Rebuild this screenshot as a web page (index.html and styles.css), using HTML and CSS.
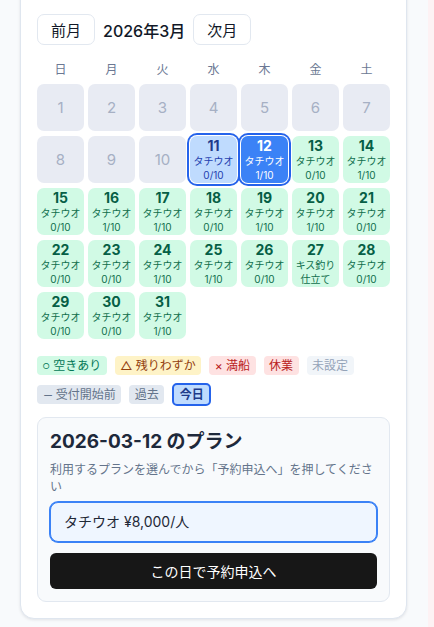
FILE: index.html
```html
<!DOCTYPE html>
<html lang="ja">
<head>
<meta charset="utf-8">
<title>予約カレンダー</title>
<link rel="stylesheet" href="styles.css">
</head>
<body>
<div class="page">
  <section class="card">
    <div class="month-nav">
      <button class="nav-btn">前月</button>
      <span class="month-title">2026年3月</span>
      <button class="nav-btn">次月</button>
    </div>
    <div class="weekdays">
      <span>日</span><span>月</span><span>火</span><span>水</span><span>木</span><span>金</span><span>土</span>
    </div>
    <div class="grid">
      <div class="cell past">1</div>
      <div class="cell past">2</div>
      <div class="cell past">3</div>
      <div class="cell past">4</div>
      <div class="cell past">5</div>
      <div class="cell past">6</div>
      <div class="cell past">7</div>
      <div class="cell past">8</div>
      <div class="cell past">9</div>
      <div class="cell past">10</div>
      <div class="cell today"><span class="num">11</span><span class="sub">タチウオ</span><span class="sub">0/10</span></div>
      <div class="cell selected"><span class="num">12</span><span class="sub">タチウオ</span><span class="sub">1/10</span></div>
      <div class="cell open"><span class="num">13</span><span class="sub">タチウオ</span><span class="sub">0/10</span></div>
      <div class="cell open"><span class="num">14</span><span class="sub">タチウオ</span><span class="sub">1/10</span></div>
      <div class="cell open"><span class="num">15</span><span class="sub">タチウオ</span><span class="sub">0/10</span></div>
      <div class="cell open"><span class="num">16</span><span class="sub">タチウオ</span><span class="sub">1/10</span></div>
      <div class="cell open"><span class="num">17</span><span class="sub">タチウオ</span><span class="sub">1/10</span></div>
      <div class="cell open"><span class="num">18</span><span class="sub">タチウオ</span><span class="sub">0/10</span></div>
      <div class="cell open"><span class="num">19</span><span class="sub">タチウオ</span><span class="sub">1/10</span></div>
      <div class="cell open"><span class="num">20</span><span class="sub">タチウオ</span><span class="sub">1/10</span></div>
      <div class="cell open"><span class="num">21</span><span class="sub">タチウオ</span><span class="sub">0/10</span></div>
      <div class="cell open"><span class="num">22</span><span class="sub">タチウオ</span><span class="sub">0/10</span></div>
      <div class="cell open"><span class="num">23</span><span class="sub">タチウオ</span><span class="sub">0/10</span></div>
      <div class="cell open"><span class="num">24</span><span class="sub">タチウオ</span><span class="sub">1/10</span></div>
      <div class="cell open"><span class="num">25</span><span class="sub">タチウオ</span><span class="sub">1/10</span></div>
      <div class="cell open"><span class="num">26</span><span class="sub">タチウオ</span><span class="sub">0/10</span></div>
      <div class="cell open"><span class="num">27</span><span class="sub">キス釣り</span><span class="sub">仕立て</span></div>
      <div class="cell open"><span class="num">28</span><span class="sub">タチウオ</span><span class="sub">0/10</span></div>
      <div class="cell open"><span class="num">29</span><span class="sub">タチウオ</span><span class="sub">0/10</span></div>
      <div class="cell open"><span class="num">30</span><span class="sub">タチウオ</span><span class="sub">0/10</span></div>
      <div class="cell open"><span class="num">31</span><span class="sub">タチウオ</span><span class="sub">1/10</span></div>
    </div>
    <div class="legend">
      <span class="badge b-open"><span class="mark">○</span> 空きあり</span>
      <span class="badge b-few">△ 残りわずか</span>
      <span class="badge b-full">× 満船</span>
      <span class="badge b-full">休業</span>
      <span class="badge b-unset">未設定</span>
      <span class="badge b-gray"><span class="dash">−</span> 受付開始前</span>
      <span class="badge b-gray">過去</span>
      <span class="badge b-today">今日</span>
    </div>
    <div class="plan">
      <h2 class="plan-title">2026-03-12 のプラン</h2>
      <p class="plan-note">利用するプランを選んでから「予約申込へ」を押してください</p>
      <div class="plan-option">タチウオ ¥8,000/人</div>
      <button class="submit">この日で予約申込へ</button>
    </div>
  </section>
  <div class="side-strip"></div>
</div>
</body>
</html>
```

FILE: styles.css
```css
* { box-sizing: border-box; }
html, body { margin: 0; padding: 0; }
body {
  background: #f8fafc;
  font-family: Inter, "Noto Sans CJK JP", sans-serif;
  color: #111827;
  overflow: hidden;
}
.page {
  display: flex;
  align-items: flex-start;
  padding-left: 20px;
  height: 627px;
}
.card {
  width: 387px;
  margin-top: -20px;
  padding: 33px 16px 16px;
  background: #fff;
  border: 1px solid #dfe6ef;
  border-radius: 14px;
  box-shadow: 0 1px 3px rgba(15, 23, 42, 0.10);
}
.side-strip {
  margin-left: auto;
  width: 6px;
  height: 100%;
  background: #fdf2f4;
}
.month-nav {
  display: flex;
  align-items: center;
  gap: 8px;
}
.nav-btn {
  height: 31px;
  padding: 0 13px;
  background: #fff;
  border: 1px solid #e2e8f0;
  border-radius: 7px;
  font-family: inherit;
  font-size: 15px;
  color: #111827;
}
.month-title {
  font-size: 16px;
  font-weight: 500;
  color: #111827;
}
.weekdays {
  display: grid;
  grid-template-columns: repeat(7, 1fr);
  column-gap: 4px;
  margin-top: 17px;
  margin-bottom: 6px;
  font-size: 12px;
  line-height: 16px;
  color: #6b7893;
  text-align: center;
}
.grid {
  display: grid;
  grid-template-columns: repeat(7, 1fr);
  grid-auto-rows: 47px;
  column-gap: 4px;
  row-gap: 5px;
}
.cell {
  border-radius: 7px;
  display: flex;
  flex-direction: column;
  align-items: center;
  justify-content: center;
}
.cell .num {
  font-size: 14px;
  line-height: 17px;
  font-weight: 700;
}
.cell .sub {
  font-size: 10px;
  line-height: 14px;
  white-space: nowrap;
}
.past {
  background: #e8ebf3;
  color: #a6b0c4;
  font-size: 15px;
}
.open {
  background: #d1fae5;
  color: #065f46;
}
.open .sub { color: #0f6e4c; }
.today {
  background: #bfdbfe;
  color: #1e3a8a;
  box-shadow: 0 0 0 1px #fff, 0 0 0 3px #2563eb;
}
.today .sub { color: #1e40af; }
.selected {
  background: #3b82f6;
  color: #fff;
  box-shadow: 0 0 0 1px #fff, 0 0 0 3px #2563eb;
}
.legend {
  display: flex;
  flex-wrap: wrap;
  align-items: center;
  gap: 8px;
  margin-top: 17px;
}
.badge {
  display: inline-block;
  height: 19px;
  padding: 0 5.5px;
  border-radius: 4px;
  font-size: 12px;
  line-height: 19px;
}
.badge .mark {
  font-size: 8px;
  vertical-align: 1px;
}
.badge .dash {
  display: inline-block;
  transform: scaleX(1.4);
  margin: 0 1px;
}
.b-open { background: #d1fae5; color: #047857; }
.b-few { background: #fef3c7; color: #92400e; }
.b-full { background: #fee2e2; color: #b91c1c; }
.b-unset { background: #f1f5f9; color: #94a3b8; }
.b-gray { background: #e2e8f0; color: #64748b; }
.b-today {
  height: 23px;
  line-height: 19px;
  background: #bfdbfe;
  color: #1e3a8a;
  font-weight: 700;
  border: 2px solid #2563eb;
  border-radius: 5px;
}
.plan {
  margin-top: 11px;
  padding: 12px;
  background: #f8fafc;
  border: 1px solid #e2e8f0;
  border-radius: 9px;
}
.plan-title {
  margin: 0;
  font-size: 19px;
  line-height: 24px;
  font-weight: 700;
  color: #1e293b;
}
.plan-note {
  margin: 7px 0 7px;
  font-size: 12px;
  line-height: 17px;
  color: #64748b;
}
.plan-option {
  height: 40px;
  padding: 0 13px;
  background: #eff6ff;
  border: 1px solid #3b82f6;
  box-shadow: 0 0 0 1px #3b82f6;
  border-radius: 8px;
  font-size: 14px;
  line-height: 38px;
  color: #1f2937;
}
.submit {
  display: block;
  width: 100%;
  height: 36px;
  margin-top: 11px;
  background: #171717;
  color: #fff;
  border: none;
  border-radius: 6px;
  font-family: inherit;
  font-size: 14px;
}
```
